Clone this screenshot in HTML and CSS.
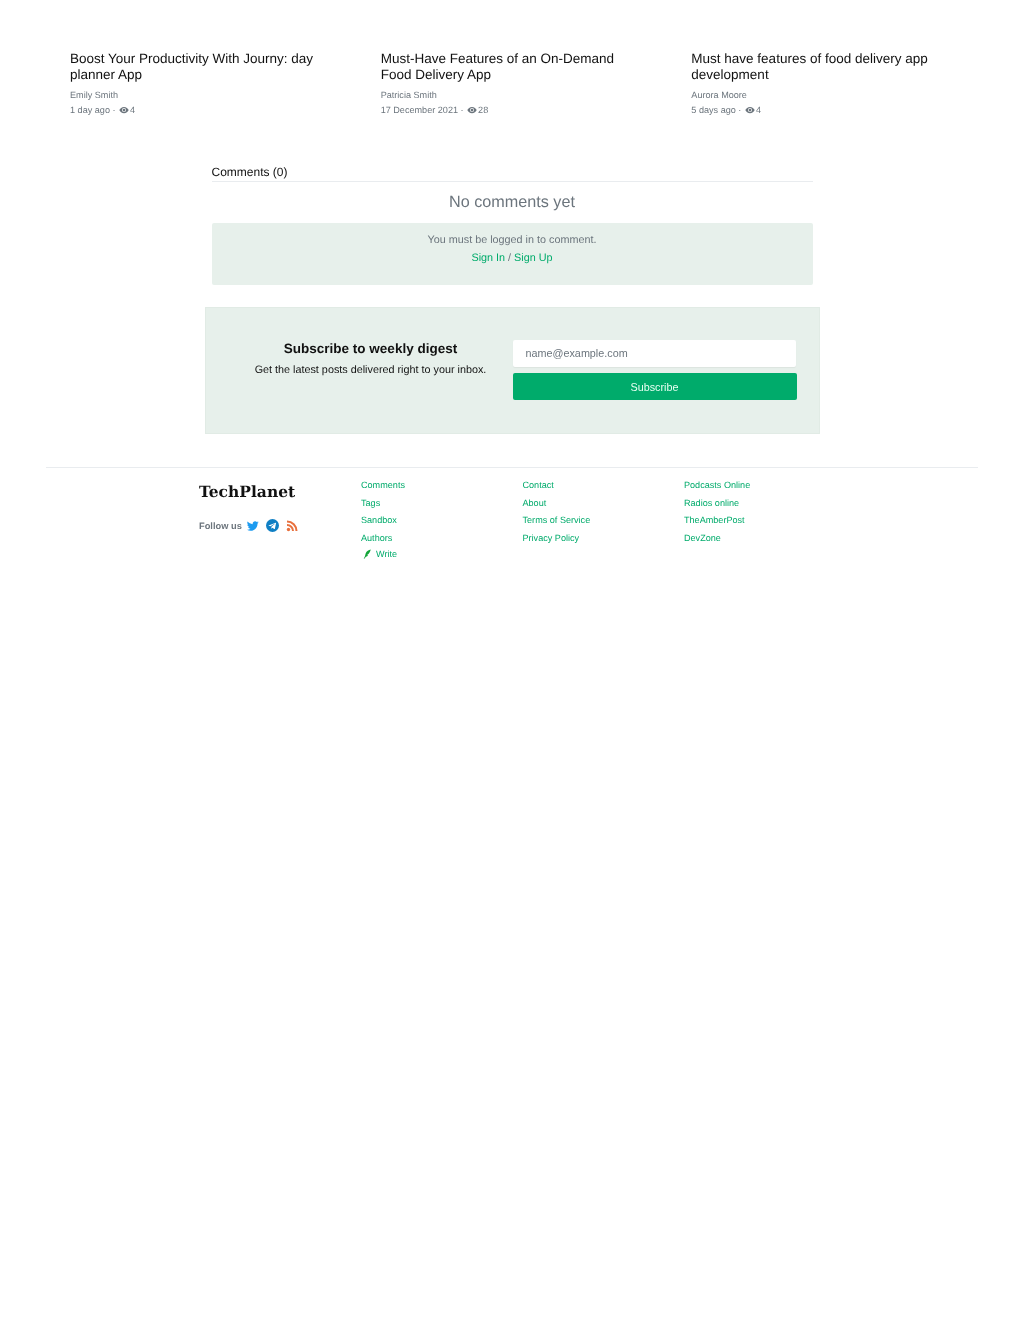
FILE: index.html
```html
<!DOCTYPE html>
<html lang="en">
<head>
    <meta charset="UTF-8">
    <title>TechPlanet</title>
    <link rel="stylesheet" href="styles.css">
</head>
<body>
    <div class="related">
        <div class="post">
            <a class="post-title">Boost Your Productivity With Journy: day planner App</a>
            <div class="post-author">Emily Smith</div>
            <div class="post-meta">1 day ago ·
                <svg class="eye" viewBox="0 0 16 12"><path d="M8 1C4.5 1 1.8 3.2.5 6c1.3 2.8 4 5 7.5 5s6.2-2.2 7.500-5C14.200 3.200 11.500 1 8 1z" fill="#6c757d"/><circle cx="8" cy="6" r="3.300" fill="#fff"/><circle cx="8" cy="6" r="2.200" fill="#6c757d"/></svg>4</div>
        </div>
        <div class="post">
            <a class="post-title">Must-Have Features of an On-Demand Food Delivery App</a>
            <div class="post-author">Patricia Smith</div>
            <div class="post-meta">17 December 2021 ·
                <svg class="eye" viewBox="0 0 16 12"><path d="M8 1C4.5 1 1.8 3.2.5 6c1.3 2.8 4 5 7.5 5s6.2-2.2 7.500-5C14.200 3.200 11.500 1 8 1z" fill="#6c757d"/><circle cx="8" cy="6" r="3.300" fill="#fff"/><circle cx="8" cy="6" r="2.200" fill="#6c757d"/></svg>28</div>
        </div>
        <div class="post">
            <a class="post-title">Must have features of food delivery app development</a>
            <div class="post-author">Aurora Moore</div>
            <div class="post-meta">5 days ago ·
                <svg class="eye" viewBox="0 0 16 12"><path d="M8 1C4.5 1 1.8 3.2.5 6c1.3 2.8 4 5 7.5 5s6.2-2.2 7.500-5C14.200 3.200 11.500 1 8 1z" fill="#6c757d"/><circle cx="8" cy="6" r="3.300" fill="#fff"/><circle cx="8" cy="6" r="2.200" fill="#6c757d"/></svg>4</div>
        </div>
    </div>

    <div class="comments">
        <div class="comments-head">Comments (0)</div>
        <div class="no-comments">No comments yet</div>
        <div class="login-box">
            <p>You must be logged in to comment.</p>
            <p class="login-links"><a>Sign In</a> / <a>Sign Up</a></p>
        </div>
    </div>

    <div class="subscribe">
        <div class="subscribe-text">
            <h3>Subscribe to weekly digest</h3>
            <p>Get the latest posts delivered right to your inbox.</p>
        </div>
        <form class="subscribe-form">
            <input type="text" placeholder="name@example.com">
            <button type="button">Subscribe</button>
        </form>
    </div>

    <footer class="footer">
        <div class="footer-inner">
            <div class="footer-brand">
                <div class="logo">TechPlanet</div>
                <div class="follow">
                    <span>Follow us</span>
                    <svg class="social twitter" viewBox="0 0 24 24"><path fill="#1d9bf0" d="M23.500 4.600c-.9.400-1.800.7-2.800.8 1-.6 1.800-1.500 2.100-2.700-.9.600-2 1-3.100 1.200C18.800 2.900 17.500 2.300 16.200 2.300c-2.700 0-4.900 2.200-4.900 4.900 0 .4 0 .8.100 1.100C7.300 8.100 3.700 6.100 1.300 3.100.9 3.800.6 4.700.6 5.600c0 1.700.9 3.200 2.200 4.100-.8 0-1.600-.2-2.200-.6v.1c0 2.400 1.700 4.400 3.900 4.800-.4.100-.8.200-1.300.2-.3 0-.6 0-.9-.1.600 2 2.400 3.400 4.600 3.400-1.700 1.300-3.800 2.100-6.100 2.100-.4 0-.8 0-1.200-.1 2.200 1.400 4.800 2.200 7.500 2.200 9.100 0 14-7.500 14-14v-.6c1-.7 1.800-1.600 2.400-2.600z"/></svg>
                    <svg class="social telegram" viewBox="0 0 24 24"><circle cx="12" cy="12" r="12" fill="#0f7fc4"/><path fill="#fff" d="M5 11.800l12.600-4.900c.6-.2 1.100.1.900 1l-2.100 10c-.2.700-.6.900-1.200.5l-3.200-2.400-1.500 1.500c-.2.200-.4.300-.7.300l.2-3.300 6-5.400c.3-.2-.1-.4-.4-.2l-7.400 4.700-3.200-1c-.7-.2-.7-.7.0-.8z"/></svg>
                    <svg class="social rss" viewBox="0 0 24 24"><circle cx="5" cy="19" r="3.400" fill="#e8703d"/><path fill="none" stroke="#e8703d" stroke-width="4" d="M2 10c6.600 0 12 5.400 12 12M2 3c10.500 0 19 8.500 19 19"/></svg>
                </div>
            </div>
            <ul class="footer-col">
                <li><a>Comments</a></li>
                <li><a>Tags</a></li>
                <li><a>Sandbox</a></li>
                <li><a>Authors</a></li>
                <li class="write"><svg class="quill" viewBox="0 0 12 12"><path fill="#13a538" d="M10.500 .5C8 1 5.500 2.500 4.500 5 4 6.800 3.500 8.500 3.200 9.500L2 11.500h1.300L4.300 9.500C6 9.300 6.800 8.500 7.300 7L5.800 6.800 7.800 6C9 4.500 10 2.500 10.500 .5z"/></svg><a>Write</a></li>
            </ul>
            <ul class="footer-col">
                <li><a>Contact</a></li>
                <li><a>About</a></li>
                <li><a>Terms of Service</a></li>
                <li><a>Privacy Policy</a></li>
            </ul>
            <ul class="footer-col">
                <li><a>Podcasts Online</a></li>
                <li><a>Radios online</a></li>
                <li><a>TheAmberPost</a></li>
                <li><a>DevZone</a></li>
            </ul>
        </div>
    </footer>
</body>
</html>
```

FILE: styles.css
```css
body {
    font-family: "Liberation Sans", Arial, sans-serif;
    text-rendering: geometricPrecision;
    will-change: transform;
    color: #111;
    margin: 0;
    padding: 0;
}

a {
    color: #00ab6b;
    text-decoration: none;
}

p {
    margin: 0;
}

.related {
    display: grid;
    grid-template-columns: repeat(3, 1fr);
    width: 932px;
    margin: 0 auto;
    padding-top: 51px;
}

.post {
    padding: 0 24px;
}

.post-title {
    display: block;
    font-size: 13.500px;
    line-height: 16px;
    color: #111;
}

.post-author {
    margin-top: 6px;
    font-size: 9.100px;
    line-height: 12px;
    color: #6c757d;
}

.post-meta {
    margin-top: 3px;
    font-size: 9.100px;
    line-height: 12px;
    color: #6c757d;
}

.eye {
    width: 10px;
    height: 8px;
    margin: 0 1px 0 1px;
    vertical-align: -1px;
}

.comments {
    width: 601px;
    margin: 48px auto 0;
}

.comments-head {
    font-size: 12px;
    line-height: 16px;
    padding-bottom: 1px;
    color: #111;
    border-bottom: 1px solid #e9ecef;
}

.no-comments {
    margin-top: 11px;
    font-size: 16.200px;
    line-height: 19px;
    text-align: center;
    color: #6c757d;
}

.login-box {
    margin-top: 11px;
    height: 62px;
    padding-top: 10px;
    box-sizing: border-box;
    background-color: #e7f0eb;
    border-radius: 2px;
    text-align: center;
    font-size: 10.800px;
    line-height: 14px;
    color: #6c757d;
}

.login-links {
    margin-top: 4px;
}

.subscribe {
    display: flex;
    width: 615px;
    height: 127px;
    box-sizing: border-box;
    margin: 22px auto 0;
    padding: 32px 22px 0 25px;
    gap: 2px;
    background-color: #e7f0eb;
    border: 1px solid #e1ebe5;
}

.subscribe-text {
    flex: 1;
    text-align: center;
}

.subscribe-text h3 {
    margin: 0;
    padding-top: 1px;
    font-size: 13.500px;
    line-height: 16px;
    color: #111;
}

.subscribe-text p {
    margin-top: 6px;
    font-size: 10.800px;
    line-height: 14px;
}

.subscribe-form {
    width: 284px;
}

.subscribe-form input {
    display: block;
    width: 283px;
    height: 27px;
    box-sizing: border-box;
    margin: 0 0 6px 0.500px;
    padding: 0 12px 2px 12.500px;
    border: 0;
    border-radius: 2px;
    background-color: #fff;
    font-family: inherit;
    font-size: 10.800px;
    box-shadow: 0 1px 1px rgba(0, 0, 0, 0.05);
}

.subscribe-form input::placeholder {
    color: #6c757d;
    opacity: 1;
}

.subscribe-form button {
    display: block;
    width: 284px;
    height: 27px;
    border: 0;
    border-radius: 2px;
    background-color: #00ab6b;
    color: #e8fff3;
    font-family: inherit;
    font-size: 10.800px;
    padding: 0;
}

.footer {
    width: 932px;
    margin: 33px auto 0;
    border-top: 1px solid #e9ecef;
}

.footer-inner {
    display: flex;
    padding: 11px 0 0 153px;
}

.footer-brand {
    width: 162px;
}

.logo {
    font-family: "DejaVu Serif", "Liberation Serif", serif;
    font-weight: bold;
    font-size: 15.500px;
    line-height: 24px;
    padding-top: 1px;
    color: #111;
}

.follow {
    display: flex;
    align-items: center;
    margin-top: 15px;
    font-size: 9.300px;
    font-weight: bold;
    line-height: 12px;
    color: #6c757d;
}

.social {
    width: 12px;
    height: 12px;
}

.twitter {
    margin-left: 5.500px;
}

.telegram {
    width: 13px;
    height: 13px;
    margin-left: 7px;
}

.rss {
    margin-left: 7px;
}

.footer-col {
    list-style: none;
    width: 161.500px;
    margin: 0;
    padding: 0;
    font-size: 9.100px;
    line-height: 12px;
}

.footer-col li {
    margin-bottom: 5.500px;
}

.write {
    display: flex;
    align-items: center;
    margin-top: -1px;
}

.quill {
    width: 10px;
    height: 10px;
    margin: 0 4.500px 0 0.500px;
}
```
